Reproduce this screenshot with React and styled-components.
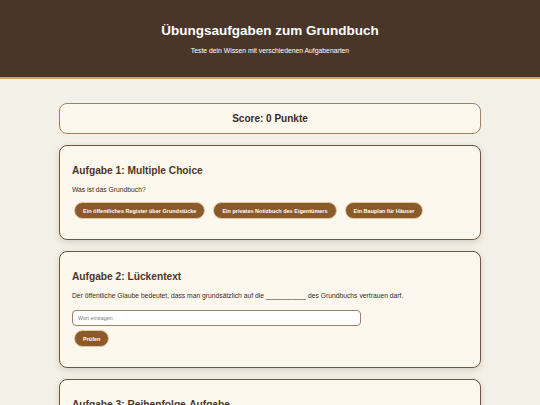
import React from "react";
import styled, { createGlobalStyle } from "styled-components";

const Global = createGlobalStyle`
  html, body { margin: 0; padding: 0; }
  body {
    background: #f3f0e7;
    font-family: "Liberation Sans", Arial, sans-serif;
    color: #3b2a1e;
  }
  * { box-sizing: border-box; }
`;

const Header = styled.header`
  background: #4a3628;
  border-bottom: 2px solid #c9a66b;
  color: #fff;
  text-align: center;
  padding: 23px 10px 0;
  height: 79px;
`;

const Title = styled.h1`
  margin: 0;
  font-size: 13.5px;
  font-weight: 700;
  line-height: 16px;
`;

const Subtitle = styled.p`
  margin: 8px 0 0;
  font-size: 6.8px;
  line-height: 8px;
`;

const Main = styled.main`
  width: 422px;
  margin: 24px auto 0;
  display: flex;
  flex-direction: column;
  gap: 11px;
`;

const ScoreCard = styled.div`
  background: #fdf8ee;
  border: 1.5px solid #a0825f;
  border-radius: 8px;
  height: 31px;
  display: flex;
  align-items: center;
  justify-content: center;
  font-size: 10px;
  font-weight: 700;
  color: #3b2a1e;
`;

const Card = styled.section`
  background: #fdf8ee;
  border: 1.2px solid #6e5644;
  border-radius: 8px;
  box-shadow: 0 2px 6px rgba(80, 60, 40, 0.18);
  padding: 18px 12px 20px;
`;

const CardTitle = styled.h2`
  margin: 0 0 8px;
  font-size: 10.2px;
  line-height: 13px;
  font-weight: 700;
  color: #4a3628;
`;

const Text = styled.p`
  margin: 0 0 8px;
  font-size: 6.75px;
  line-height: 9px;
  color: #3b2a1e;
`;

const Options = styled.div`
  display: flex;
  gap: 8px;
  padding-left: 2px;
`;

const PillButton = styled.button`
  background: #8b5a2b;
  color: #fff;
  border: 1px solid #e4c9a0;
  border-radius: 9px;
  height: 17px;
  padding: 0 8px;
  font-family: "Liberation Sans", Arial, sans-serif;
  font-size: 5.5px;
  font-weight: 700;
  cursor: pointer;
`;

const Input = styled.input`
  display: block;
  width: 289px;
  height: 16px;
  border: 1px solid #9c8166;
  border-radius: 4px;
  background: #fff;
  padding: 0 5px;
  font-family: "Liberation Sans", Arial, sans-serif;
  font-size: 5.3px;
  margin-top: 10px;
  &::placeholder { color: #777; }
`;

const CheckRow = styled.div`
  display: flex;
  margin-top: 4px;
  padding-left: 2px;
`;

const Blank = styled.span`
  letter-spacing: -0.1px;
`;

export default function App() {
  return (
    <>
      <Global />
      <Header>
        <Title>Übungsaufgaben zum Grundbuch</Title>
        <Subtitle>Teste dein Wissen mit verschiedenen Aufgabenarten</Subtitle>
      </Header>
      <Main>
        <ScoreCard>Score: 0 Punkte</ScoreCard>
        <Card>
          <CardTitle>Aufgabe 1: Multiple Choice</CardTitle>
          <Text>Was ist das Grundbuch?</Text>
          <Options>
            <PillButton>Ein öffentliches Register über Grundstücke</PillButton>
            <PillButton>Ein privates Notizbuch des Eigentümers</PillButton>
            <PillButton>Ein Bauplan für Häuser</PillButton>
          </Options>
        </Card>
        <Card>
          <CardTitle>Aufgabe 2: Lückentext</CardTitle>
          <Text>
            Der öffentliche Glaube bedeutet, dass man grundsätzlich auf die{" "}
            <Blank>___________</Blank> des Grundbuchs vertrauen darf.
          </Text>
          <Input placeholder="Wort eintragen" />
          <CheckRow>
            <PillButton>Prüfen</PillButton>
          </CheckRow>
        </Card>
        <Card>
          <CardTitle>Aufgabe 3: Reihenfolge-Aufgabe</CardTitle>
          <Text>Bringe die Schritte in die richtige Reihenfolge.</Text>
        </Card>
      </Main>
    </>
  );
}
